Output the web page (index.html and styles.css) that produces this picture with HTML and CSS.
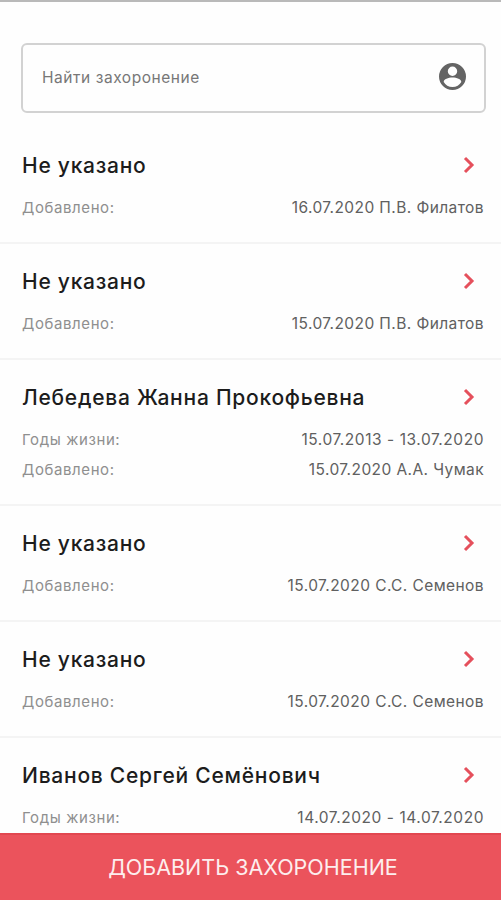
FILE: index.html
```html
<!DOCTYPE html>
<html lang="ru">
<head>
    <meta charset="UTF-8">
    <meta name="viewport" content="width=device-width, initial-scale=1.0">
    <title>Захоронения</title>
    <link rel="stylesheet" href="styles.css">
</head>
<body>
    <div class="app">
        <div class="search">
            <span class="search-text">Найти захоронение</span>
            <svg class="account" viewBox="0 0 27 27"><path fill="currentColor" fill-rule="evenodd" d="M13.500 0a13.500 13.500 0 1 0 0 27a13.500 13.500 0 0 0 0-27zM13.500 3.600a4.700 4.700 0 1 1 0 9.400a4.700 4.700 0 0 1 0-9.400zM13.500 14.600c4.200 0 8.800 1.600 8.800 4.400c-1.700 3-5 5-8.800 5s-7.100-2-8.800-5c0-2.800 4.600-4.400 8.800-4.400z"/></svg>
        </div>

        <div class="list">
            <div class="item">
                <div class="item-head"><h2>Не указано</h2><svg class="arrow" viewBox="0 0 12 18"><path d="M2 2l7 7-7 7"/></svg></div>
                <div class="row"><span class="label">Добавлено:</span><span class="value">16.07.2020 П.В. Филатов</span></div>
            </div>
            <div class="item">
                <div class="item-head"><h2>Не указано</h2><svg class="arrow" viewBox="0 0 12 18"><path d="M2 2l7 7-7 7"/></svg></div>
                <div class="row"><span class="label">Добавлено:</span><span class="value">15.07.2020 П.В. Филатов</span></div>
            </div>
            <div class="item">
                <div class="item-head"><h2>Лебедева Жанна Прокофьевна</h2><svg class="arrow" viewBox="0 0 12 18"><path d="M2 2l7 7-7 7"/></svg></div>
                <div class="row"><span class="label">Годы жизни:</span><span class="value years">15.07.2013 - 13.07.2020</span></div>
                <div class="row"><span class="label">Добавлено:</span><span class="value">15.07.2020 А.А. Чумак</span></div>
            </div>
            <div class="item">
                <div class="item-head"><h2>Не указано</h2><svg class="arrow" viewBox="0 0 12 18"><path d="M2 2l7 7-7 7"/></svg></div>
                <div class="row"><span class="label">Добавлено:</span><span class="value">15.07.2020 С.С. Семенов</span></div>
            </div>
            <div class="item">
                <div class="item-head"><h2>Не указано</h2><svg class="arrow" viewBox="0 0 12 18"><path d="M2 2l7 7-7 7"/></svg></div>
                <div class="row"><span class="label">Добавлено:</span><span class="value">15.07.2020 С.С. Семенов</span></div>
            </div>
            <div class="item">
                <div class="item-head"><h2>Иванов Сергей Семёнович</h2><svg class="arrow" viewBox="0 0 12 18"><path d="M2 2l7 7-7 7"/></svg></div>
                <div class="row"><span class="label">Годы жизни:</span><span class="value years">14.07.2020 - 14.07.2020</span></div>
            </div>
        </div>

        <button class="add-button">ДОБАВИТЬ ЗАХОРОНЕНИЕ</button>
    </div>
</body>
</html>
```
FILE: styles.css
```css
* {
    margin: 0;
    padding: 0;
    box-sizing: border-box;
}

body {
    font-family: Inter, "Liberation Sans", sans-serif;
    background-color: #fefefe;
    color: #1c1c1c;
}

.app {
    display: flex;
    flex-direction: column;
    height: 900px;
    border-top: 2px solid #b9b9b9;
    overflow: hidden;
}

.search {
    display: flex;
    flex: none;
    align-items: center;
    justify-content: space-between;
    height: 70px;
    margin: 41px 15px 0 21px;
    padding: 0 18px 3px 19px;
    border: 2px solid #d2d2d2;
    border-radius: 6px;
}

.search-text {
    padding-top: 2px;
    font-size: 15.5px;
    letter-spacing: 0.55px;
    color: #777;
}

.account {
    width: 27px;
    height: 27px;
    color: #646464;
}

.list {
    flex: 1;
    min-height: 0;
    padding-top: 15px;
    overflow: hidden;
}

.item {
    padding: 21px 17px 20px 22px;
    border-bottom: 2px solid #f4f4f4;
}

.item-head {
    display: flex;
    align-items: center;
    justify-content: space-between;
    height: 32px;
    padding-right: 9px;
    margin-bottom: 11px;
}

.item h2 {
    font-size: 21px;
    font-weight: 500;
    letter-spacing: 0.75px;
    white-space: nowrap;
}

.arrow {
    width: 12px;
    height: 18px;
    fill: none;
    stroke: #e5505c;
    stroke-width: 3;
}

.row {
    display: flex;
    align-items: center;
    justify-content: space-between;
    height: 30px;
    font-size: 15.5px;
    letter-spacing: 0.42px;
}

.label {
    font-size: 15px;
    letter-spacing: 0.6px;
    color: #8f8f8f;
}

.value {
    color: #606060;
}

.years {
    letter-spacing: 0.55px;
}

.add-button {
    flex: none;
    height: 67px;
    padding-left: 5px;
    padding-bottom: 1px;
    border: none;
    border-top: 2px solid #e24750;
    background: #eb535c;
    color: #fdeeee;
    font-family: inherit;
    font-size: 21.5px;
}
```
